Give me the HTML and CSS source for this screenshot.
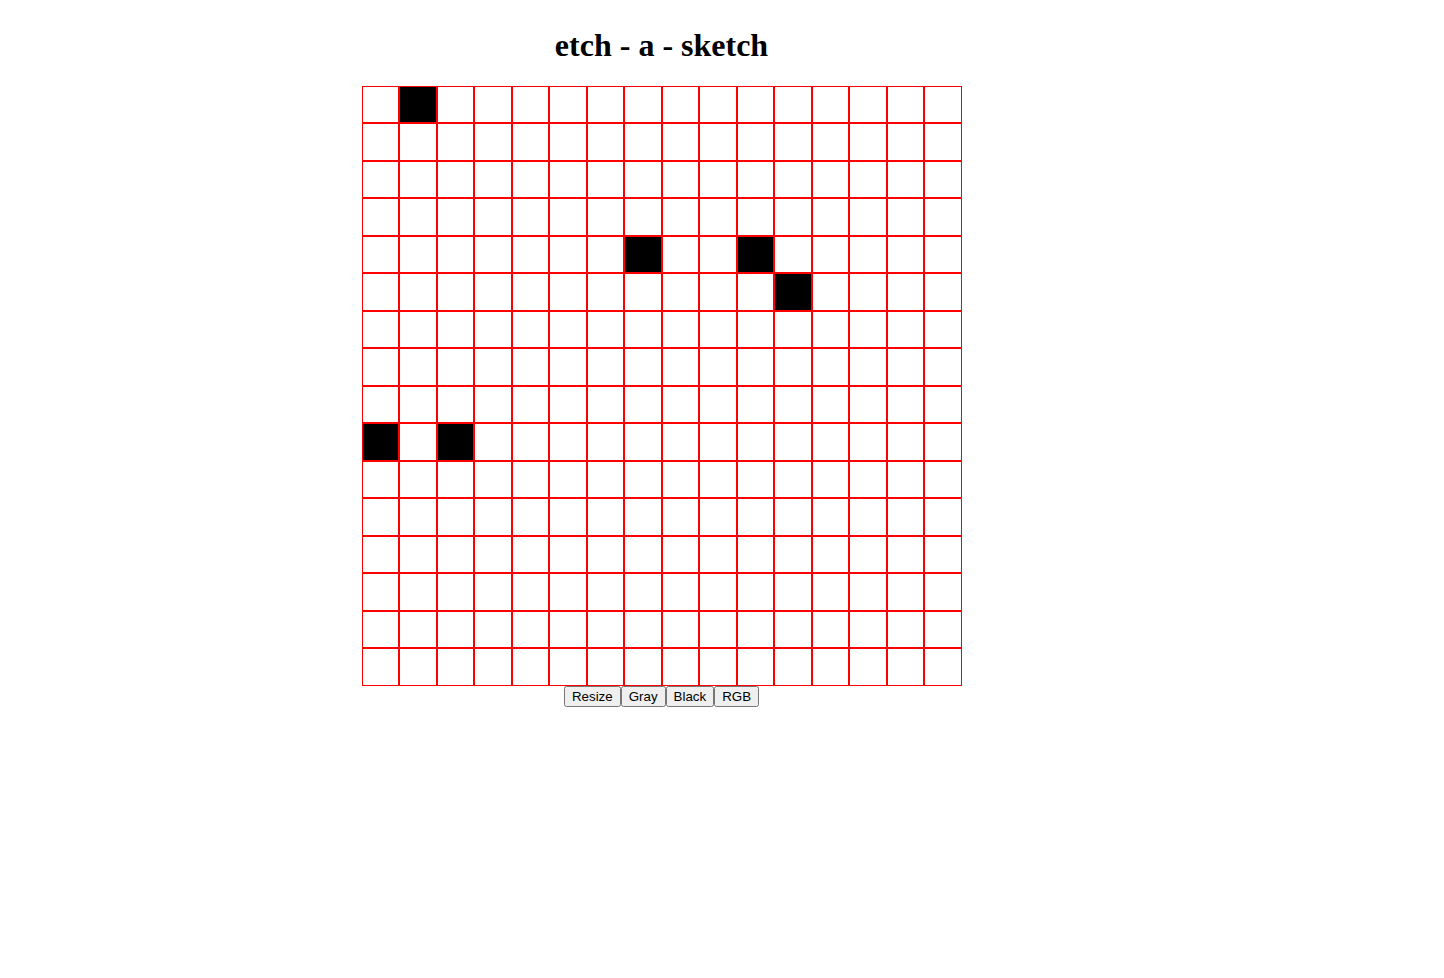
FILE: index.html
```html
<!DOCTYPE html>
<html>
<head>
<meta charset="utf-8">
<link rel="stylesheet" href="styles.css">
</head>
<body>
<div class="app">
  <h1 class="title">etch - a - sketch</h1>
  <div class="grid">
    <div class="cell"></div><div class="cell on"></div><div class="cell"></div><div class="cell"></div><div class="cell"></div><div class="cell"></div><div class="cell"></div><div class="cell"></div><div class="cell"></div><div class="cell"></div><div class="cell"></div><div class="cell"></div><div class="cell"></div><div class="cell"></div><div class="cell"></div><div class="cell"></div>
    <div class="cell"></div><div class="cell"></div><div class="cell"></div><div class="cell"></div><div class="cell"></div><div class="cell"></div><div class="cell"></div><div class="cell"></div><div class="cell"></div><div class="cell"></div><div class="cell"></div><div class="cell"></div><div class="cell"></div><div class="cell"></div><div class="cell"></div><div class="cell"></div>
    <div class="cell"></div><div class="cell"></div><div class="cell"></div><div class="cell"></div><div class="cell"></div><div class="cell"></div><div class="cell"></div><div class="cell"></div><div class="cell"></div><div class="cell"></div><div class="cell"></div><div class="cell"></div><div class="cell"></div><div class="cell"></div><div class="cell"></div><div class="cell"></div>
    <div class="cell"></div><div class="cell"></div><div class="cell"></div><div class="cell"></div><div class="cell"></div><div class="cell"></div><div class="cell"></div><div class="cell"></div><div class="cell"></div><div class="cell"></div><div class="cell"></div><div class="cell"></div><div class="cell"></div><div class="cell"></div><div class="cell"></div><div class="cell"></div>
    <div class="cell"></div><div class="cell"></div><div class="cell"></div><div class="cell"></div><div class="cell"></div><div class="cell"></div><div class="cell"></div><div class="cell on"></div><div class="cell"></div><div class="cell"></div><div class="cell on"></div><div class="cell"></div><div class="cell"></div><div class="cell"></div><div class="cell"></div><div class="cell"></div>
    <div class="cell"></div><div class="cell"></div><div class="cell"></div><div class="cell"></div><div class="cell"></div><div class="cell"></div><div class="cell"></div><div class="cell"></div><div class="cell"></div><div class="cell"></div><div class="cell"></div><div class="cell on"></div><div class="cell"></div><div class="cell"></div><div class="cell"></div><div class="cell"></div>
    <div class="cell"></div><div class="cell"></div><div class="cell"></div><div class="cell"></div><div class="cell"></div><div class="cell"></div><div class="cell"></div><div class="cell"></div><div class="cell"></div><div class="cell"></div><div class="cell"></div><div class="cell"></div><div class="cell"></div><div class="cell"></div><div class="cell"></div><div class="cell"></div>
    <div class="cell"></div><div class="cell"></div><div class="cell"></div><div class="cell"></div><div class="cell"></div><div class="cell"></div><div class="cell"></div><div class="cell"></div><div class="cell"></div><div class="cell"></div><div class="cell"></div><div class="cell"></div><div class="cell"></div><div class="cell"></div><div class="cell"></div><div class="cell"></div>
    <div class="cell"></div><div class="cell"></div><div class="cell"></div><div class="cell"></div><div class="cell"></div><div class="cell"></div><div class="cell"></div><div class="cell"></div><div class="cell"></div><div class="cell"></div><div class="cell"></div><div class="cell"></div><div class="cell"></div><div class="cell"></div><div class="cell"></div><div class="cell"></div>
    <div class="cell on"></div><div class="cell"></div><div class="cell on"></div><div class="cell"></div><div class="cell"></div><div class="cell"></div><div class="cell"></div><div class="cell"></div><div class="cell"></div><div class="cell"></div><div class="cell"></div><div class="cell"></div><div class="cell"></div><div class="cell"></div><div class="cell"></div><div class="cell"></div>
    <div class="cell"></div><div class="cell"></div><div class="cell"></div><div class="cell"></div><div class="cell"></div><div class="cell"></div><div class="cell"></div><div class="cell"></div><div class="cell"></div><div class="cell"></div><div class="cell"></div><div class="cell"></div><div class="cell"></div><div class="cell"></div><div class="cell"></div><div class="cell"></div>
    <div class="cell"></div><div class="cell"></div><div class="cell"></div><div class="cell"></div><div class="cell"></div><div class="cell"></div><div class="cell"></div><div class="cell"></div><div class="cell"></div><div class="cell"></div><div class="cell"></div><div class="cell"></div><div class="cell"></div><div class="cell"></div><div class="cell"></div><div class="cell"></div>
    <div class="cell"></div><div class="cell"></div><div class="cell"></div><div class="cell"></div><div class="cell"></div><div class="cell"></div><div class="cell"></div><div class="cell"></div><div class="cell"></div><div class="cell"></div><div class="cell"></div><div class="cell"></div><div class="cell"></div><div class="cell"></div><div class="cell"></div><div class="cell"></div>
    <div class="cell"></div><div class="cell"></div><div class="cell"></div><div class="cell"></div><div class="cell"></div><div class="cell"></div><div class="cell"></div><div class="cell"></div><div class="cell"></div><div class="cell"></div><div class="cell"></div><div class="cell"></div><div class="cell"></div><div class="cell"></div><div class="cell"></div><div class="cell"></div>
    <div class="cell"></div><div class="cell"></div><div class="cell"></div><div class="cell"></div><div class="cell"></div><div class="cell"></div><div class="cell"></div><div class="cell"></div><div class="cell"></div><div class="cell"></div><div class="cell"></div><div class="cell"></div><div class="cell"></div><div class="cell"></div><div class="cell"></div><div class="cell"></div>
    <div class="cell"></div><div class="cell"></div><div class="cell"></div><div class="cell"></div><div class="cell"></div><div class="cell"></div><div class="cell"></div><div class="cell"></div><div class="cell"></div><div class="cell"></div><div class="cell"></div><div class="cell"></div><div class="cell"></div><div class="cell"></div><div class="cell"></div><div class="cell"></div>
  </div>
  <div class="controls">
    <button class="btn">Resize</button><button class="btn">Gray</button><button class="btn">Black</button><button class="btn">RGB</button>
  </div>
</div>
</body>
</html>
```

FILE: styles.css
```css
html, body {
  background: #ffffff;
}
body {
  margin: 8px;
  font-family: "Liberation Serif", "Times New Roman", serif;
}
.app {
  width: 600px;
  margin-left: 353.5px;
  display: flex;
  flex-direction: column;
  align-items: stretch;
}
.title {
  font-size: 32px;
  font-weight: bold;
  text-align: center;
  margin: 19px 0 0 0;
  height: 58.5px;
  line-height: 37px;
  color: #000;
}
.grid {
  width: 600px;
  height: 600px;
  display: grid;
  grid-template-columns: repeat(16, 1fr);
  grid-template-rows: repeat(16, 1fr);
}
.cell {
  box-sizing: border-box;
  border: 1px solid #ff0000;
  background: #ffffff;
}
.cell.on {
  background: #000000;
}
.controls {
  display: flex;
  justify-content: center;
  padding-top: 0.5px;
}
.btn {
  font-family: "Liberation Sans", Arial, sans-serif;
  font-size: 13.333px;
  margin: 0;
  color: #000;
}
```
